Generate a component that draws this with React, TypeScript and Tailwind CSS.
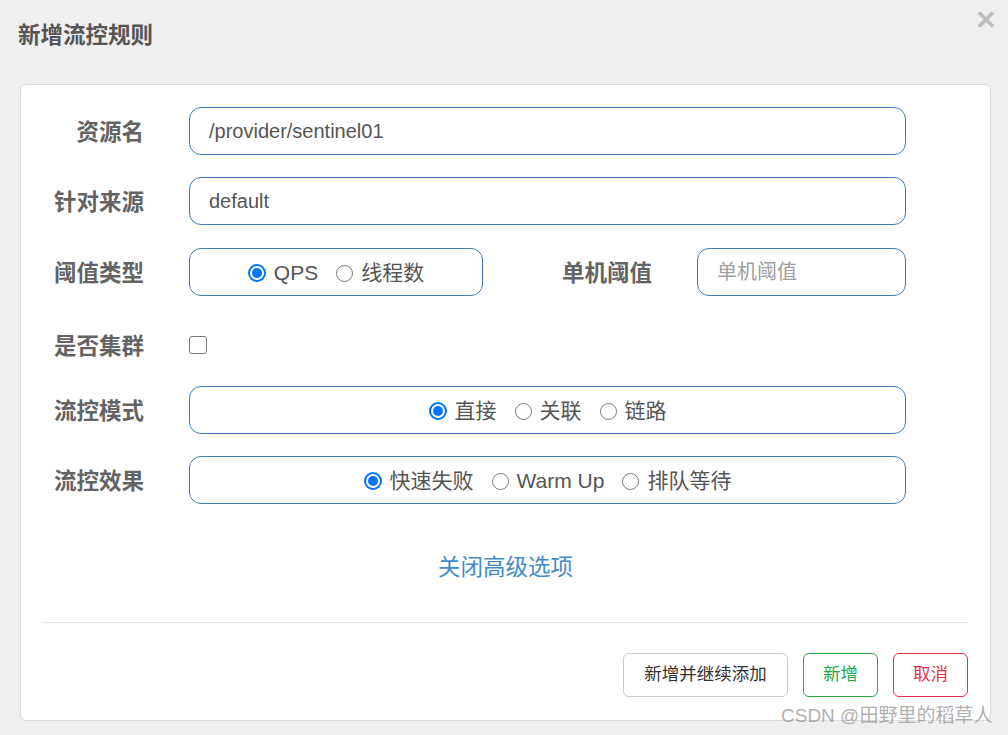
import React from "react";

const font = "font-['Liberation_Sans','Noto_Sans_CJK_SC',sans-serif]";

function Radio({ checked, label }: { checked?: boolean; label: string }) {
  return (
    <span className="flex items-center">
      {checked ? (
        <span className="w-[18px] h-[18px] rounded-full bg-[#0075ff] flex items-center justify-center">
          <span className="w-[14px] h-[14px] rounded-full bg-white flex items-center justify-center">
            <span className="w-[10px] h-[10px] rounded-full bg-[#0075ff]" />
          </span>
        </span>
      ) : (
        <span className="w-[17px] h-[17px] rounded-full border-[1.5px] border-[#767676] bg-white" />
      )}
      <span className="ml-[8px] text-[21px] text-[#555]">{label}</span>
    </span>
  );
}

function RadioBox({ items, width }: { items: string[]; width: string }) {
  return (
    <div
      className={`${width} h-[48px] rounded-[12px] border border-[#3e7cb8] flex items-center justify-center gap-[18px] pt-[2px]`}
    >
      {items.map((it, i) => (
        <Radio key={it} label={it} checked={i === 0} />
      ))}
    </div>
  );
}

function Label({ children, width = "w-[123px]" }: { children: React.ReactNode; width?: string }) {
  return (
    <div className={`${width} shrink-0 text-right text-[22.5px] font-bold text-[#636363] leading-none pt-[5px]`}>
      {children}
    </div>
  );
}

function TextInput({ value, placeholder, width = "w-[717px]" }: { value?: string; placeholder?: string; width?: string }) {
  return (
    <div
      className={`${width} h-[48px] rounded-[12px] border border-[#3e7cb8] flex items-center pl-[19px] text-[20px] ${
        value ? "text-[#555]" : "text-[#a0a0a0]"
      }`}
    >
      {value ?? placeholder}
    </div>
  );
}

export default function App() {
  return (
    <div className={`${font} w-[1008px] h-[735px] bg-[#efefef] relative overflow-hidden`}>
      <div className="h-[72px] pl-[18px] flex items-center">
        <h1 className="text-[22.5px] font-bold text-[#555]">新增流控规则</h1>
      </div>
      <div className="absolute right-[11px] top-[7px] text-[#bdbdbd] text-[26px] font-bold leading-none">
        ✕
      </div>

      <div className="ml-[20px] mt-[12px] w-[971px] h-[637px] bg-white border border-[#dcdcdc] rounded-[6px] flex flex-col">
        <div className="flex items-center mt-[22px]">
          <Label>资源名</Label>
          <div className="ml-[45px]">
            <TextInput value="/provider/sentinel01" />
          </div>
        </div>
        <div className="flex items-center mt-[22px]">
          <Label>针对来源</Label>
          <div className="ml-[45px]">
            <TextInput value="default" />
          </div>
        </div>
        <div className="flex items-center mt-[23px]">
          <Label>阈值类型</Label>
          <div className="ml-[45px]">
            <RadioBox items={["QPS", "线程数"]} width="w-[294px]" />
          </div>
          <Label width="w-[169px]">单机阈值</Label>
          <div className="ml-[45px]">
            <TextInput placeholder="单机阈值" width="w-[209px]" />
          </div>
        </div>
        <div className="flex items-center mt-[25px] h-[48px]">
          <Label>是否集群</Label>
          <div className="ml-[45px] w-[18px] h-[18px] rounded-[3px] border-[1.5px] border-[#767676]" />
        </div>
        <div className="flex items-center mt-[17px]">
          <Label>流控模式</Label>
          <div className="ml-[45px]">
            <RadioBox items={["直接", "关联", "链路"]} width="w-[717px]" />
          </div>
        </div>
        <div className="flex items-center mt-[22px]">
          <Label>流控效果</Label>
          <div className="ml-[45px]">
            <RadioBox items={["快速失败", "Warm Up", "排队等待"]} width="w-[717px]" />
          </div>
        </div>

        <div className="mt-[53px] text-center text-[22.5px] text-[#428bca] leading-none">
          关闭高级选项
        </div>

        <div className="mx-[22px] mt-[42px] border-t border-[#e5e5e5]" />

        <div className="flex justify-end gap-[15px] mr-[22px] mt-[30px]">
          <button className="w-[165px] h-[44px] rounded-[6px] border border-[#cccccc] text-[17.5px] text-[#333]">
            新增并继续添加
          </button>
          <button className="w-[75px] h-[44px] rounded-[6px] border border-[#28a745] text-[17.5px] text-[#28a745]">
            新增
          </button>
          <button className="w-[75px] h-[44px] rounded-[6px] border border-[#dc3545] text-[17.5px] text-[#dc3545]">
            取消
          </button>
        </div>
      </div>

      <div className="absolute left-[781px] top-[702px] text-[19px] text-[#9a9a9a]/80 whitespace-nowrap">
        CSDN @田野里的稻草人
      </div>
    </div>
  );
}
